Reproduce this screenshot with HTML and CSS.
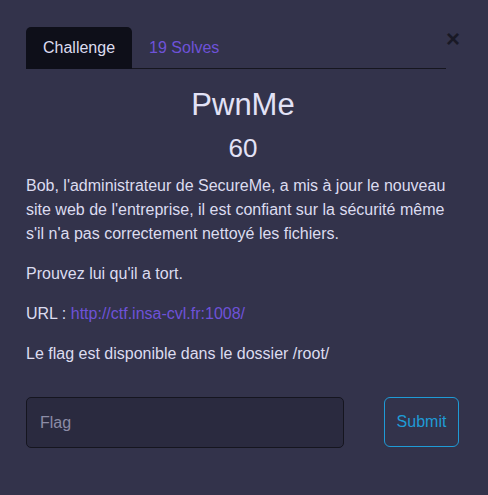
FILE: index.html
```html
<!DOCTYPE html>
<html lang="fr">
<head>
<meta charset="utf-8">
<title>PwnMe</title>
<link rel="stylesheet" href="styles.css">
</head>
<body>
<div class="modal">
  <div class="header">
    <nav class="tabs">
      <a class="tab active" href="#">Challenge</a>
      <a class="tab" href="#">19 Solves</a>
    </nav>
    <button class="close" type="button" aria-label="Close">×</button>
  </div>
  <h2 class="title">PwnMe</h2>
  <h3 class="value">60</h3>
  <div class="desc">
    <p>Bob, l'administrateur de SecureMe, a mis à jour le nouveau site web de l'entreprise, il est confiant sur la sécurité même s'il n'a pas correctement nettoyé les fichiers.</p>
    <p>Prouvez lui qu'il a tort.</p>
    <p>URL : <a href="#">http://ctf.insa-cvl.fr:1008/</a></p>
    <p>Le flag est disponible dans le dossier /root/</p>
  </div>
  <form class="flag-form">
    <input class="flag-input" type="text" placeholder="Flag">
    <button class="submit" type="button">Submit</button>
  </form>
</div>
</body>
</html>
```

FILE: styles.css
```css
html, body {
  margin: 0;
  padding: 0;
  background: #33334b;
  height: 100%;
}
body {
  font-family: "Liberation Sans", Arial, sans-serif;
  font-size: 16px;
  line-height: 24px;
  color: #dcdcf0;
}
.modal {
  width: 434px;
  padding: 27px 0 0 26px;
}
.header {
  display: flex;
  justify-content: space-between;
  align-items: flex-start;
}
.tabs {
  width: 420px;
  display: flex;
  border-bottom: 1px solid #16161f;
}
.tab {
  display: block;
  padding: 8px 16px;
  border: 1px solid transparent;
  border-radius: 5px 5px 0 0;
  margin-bottom: -1px;
  text-decoration: none;
  color: #6e52d8;
}
.tab.active {
  background: #0e0f19;
  color: #dcdcf0;
}
.close {
  background: none;
  border: 0;
  padding: 0;
  margin: 0;
  width: 14px;
  font-family: "Liberation Sans", Arial, sans-serif;
  font-size: 24px;
  font-weight: 700;
  line-height: 24px;
  color: #000;
  opacity: 0.5;
  cursor: pointer;
}
.title {
  margin: 17px 0 0 0;
  width: 434px;
  text-align: center;
  font-size: 31px;
  font-weight: 400;
  line-height: 37px;
  color: #e2e2f6;
}
.value {
  margin: 10px 0 0 0;
  width: 434px;
  text-align: center;
  font-size: 26px;
  font-weight: 400;
  line-height: 31px;
  color: #e2e2f6;
}
.desc {
  margin-top: 10px;
  width: 434px;
}
.desc p {
  margin: 0 0 16px 0;
}
.desc a {
  color: #6e52d8;
  text-decoration: none;
}
.flag-form {
  display: flex;
  justify-content: space-between;
  align-items: flex-start;
  margin-top: 31px;
  width: 434px;
}
.flag-input {
  box-sizing: border-box;
  width: 318px;
  height: 51px;
  padding: 12px 13px;
  background: #2a2a3f;
  border: 1px solid #15151f;
  border-radius: 5px;
  font-family: "Liberation Sans", Arial, sans-serif;
  font-size: 16px;
  color: #dcdcf0;
  outline: none;
}
.flag-input::placeholder {
  color: #8c8ca6;
}
.submit {
  box-sizing: border-box;
  width: 75px;
  height: 50px;
  padding: 12px 0;
  margin-right: 1px;
  background: transparent;
  border: 1px solid #1f9bd6;
  border-radius: 6px;
  font-family: "Liberation Sans", Arial, sans-serif;
  font-size: 16px;
  line-height: 24px;
  color: #1f9bd6;
  cursor: pointer;
}
```
